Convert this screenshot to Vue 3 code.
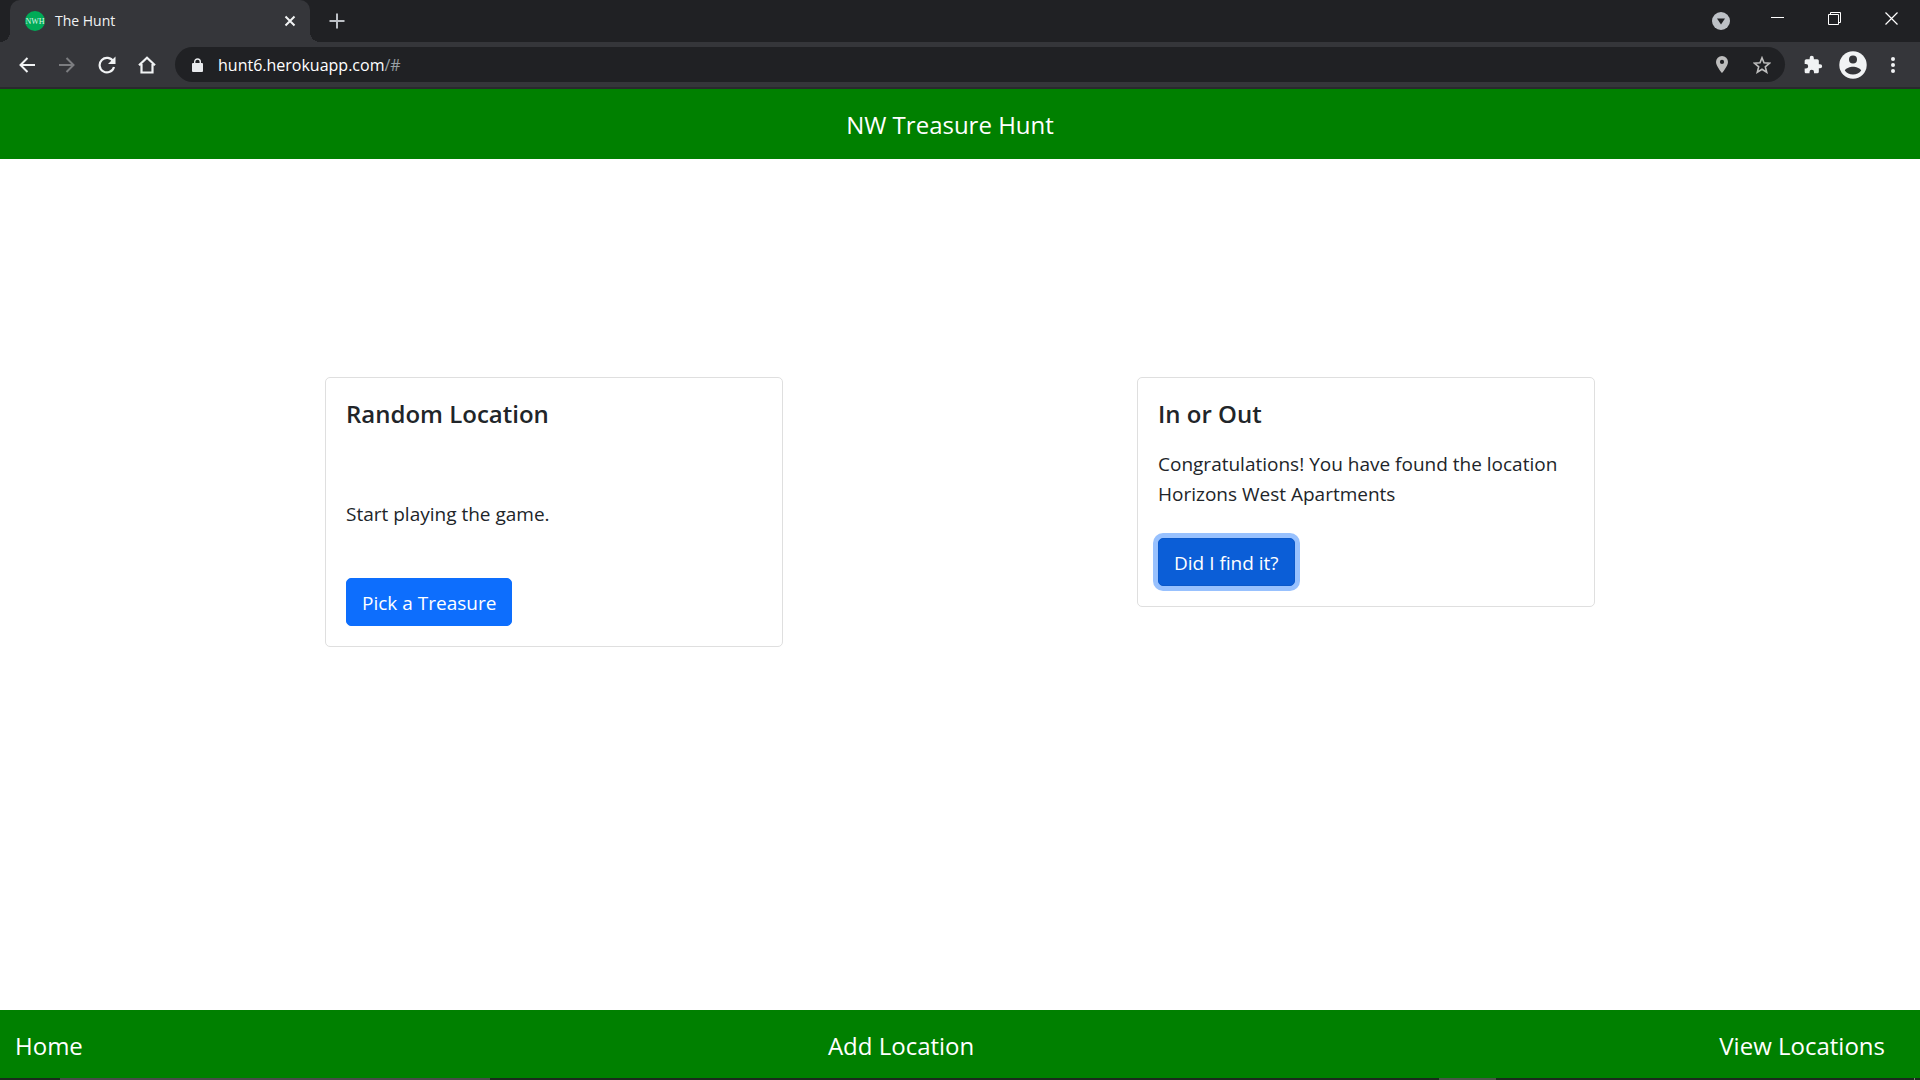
<script setup>
import { ref } from 'vue'

const address = 'hunt6.herokuapp.com'
const cards = ref([
  { id: 'random', title: 'Random Location', text: ['Start playing the game.'], action: 'Pick a Treasure', active: false },
  {
    id: 'result',
    title: 'In or Out',
    text: ['Congratulations! You have found the location', 'Horizons West Apartments'],
    action: 'Did I find it?',
    active: true
  }
])
const links = ['Home', 'Add Location', 'View Locations']
</script>

<template>
  <div class="window">
    <div class="tabstrip">
      <div class="tab">
        <svg class="favicon" width="20" height="20" viewBox="0 0 20 20">
          <circle cx="10" cy="10" r="10" fill="#00ab57" />
          <text x="10" y="13" text-anchor="middle" font-size="8" fill="#d9f5e5">NWH</text>
        </svg>
        <span class="tab-title">The Hunt</span>
        <button class="icon tab-close" aria-label="Close tab">
          <svg width="12" height="12" viewBox="0 0 12 12"><path d="M1.5 1.5l9 9M10.5 1.5l-9 9" stroke="#f1f3f4" stroke-width="2" /></svg>
        </button>
      </div>
      <button class="icon new-tab" aria-label="New tab">
        <svg width="16" height="16" viewBox="0 0 16 16"><path d="M8 .5v15M.5 8h15" stroke="#bdc1c6" stroke-width="2" /></svg>
      </button>
      <div class="window-controls">
        <button class="icon search-tabs" aria-label="Search tabs">
          <svg width="18" height="18" viewBox="0 0 18 18"><circle cx="9" cy="9" r="9" fill="#bdc1c6" /><path d="M5 6.500h8L9 12.500z" fill="#202124" /></svg>
        </button>
        <button class="icon control" aria-label="Minimize">
          <svg width="13" height="13" viewBox="0 0 13 13"><path d="M0 5.500h13" stroke="#fff" /></svg>
        </button>
        <button class="icon control" aria-label="Restore">
          <svg width="13" height="13" viewBox="0 0 13 13" fill="none" stroke="#fff"><path d="M.5 2.500h10v10H.5zM2.500 2.500v-2h10v10h-2" /></svg>
        </button>
        <button class="icon control" aria-label="Close window">
          <svg width="13" height="13" viewBox="0 0 13 13"><path d="M.5.5l12 12M12.500.5l-12 12" stroke="#fff" stroke-width="1.200" /></svg>
        </button>
      </div>
    </div>

    <div class="toolbar">
      <button class="icon nav" aria-label="Back">
        <svg width="16" height="16" viewBox="0 0 16 16" fill="none" stroke="#f1f3f4" stroke-width="2"><path d="M16 8H1.500M8.500 1L1.500 8l7 7" /></svg>
      </button>
      <button class="icon nav" aria-label="Forward">
        <svg width="16" height="16" viewBox="0 0 16 16" fill="none" stroke="#7c7d80" stroke-width="2"><path d="M0 8h14.500M7.500 1l7 7-7 7" /></svg>
      </button>
      <button class="icon nav" aria-label="Reload">
        <svg width="18" height="18" viewBox="0 0 18 18"><path d="M15.300 5.500A7.300 7.300 0 1 0 16 11" fill="none" stroke="#f1f3f4" stroke-width="2.200" /><path d="M17.500.5V8H10z" fill="#f1f3f4" /></svg>
      </button>
      <button class="icon nav" aria-label="Home page">
        <svg width="18" height="18" viewBox="0 0 18 18"><path d="M1 9.200L9 1.800l8 7.400M3.500 8v8.500h11V8" fill="none" stroke="#f1f3f4" stroke-width="2.200" /></svg>
      </button>
      <div class="omnibox">
        <svg width="12" height="14" viewBox="0 0 12 14"><rect x="0" y="5" width="11" height="9" rx="1" fill="#e8eaed" /><path d="M2.700 5.500V3.800a2.800 2.800 0 0 1 5.600 0v1.700" fill="none" stroke="#e8eaed" stroke-width="1.400" /></svg>
        <span class="url">{{ address }}<span class="path">/#</span></span>
        <button class="icon" aria-label="Location access">
          <svg width="12" height="17" viewBox="0 0 12 17"><path d="M6 0a6 6 0 0 0-6 6c0 4.300 6 11 6 11s6-6.700 6-11a6 6 0 0 0-6-6zm0 8a2.100 2.100 0 1 1 0-4.200A2.100 2.100 0 0 1 6 8z" fill="#bdbdbd" /></svg>
        </button>
        <button class="icon star" aria-label="Bookmark this page">
          <svg width="18" height="18" viewBox="0 0 18 18"><path d="M9 1.800l2 5 5.600.4-4.300 3.600 1.400 5.400L9 13.300l-4.700 2.900 1.400-5.400L1.400 7.200 7 6.800z" fill="none" stroke="#bdbdbd" stroke-width="1.600" /></svg>
        </button>
      </div>
      <button class="icon extensions" aria-label="Extensions">
        <svg width="20" height="20" viewBox="0 0 24 24"><path d="M20.500 11H19V7a2 2 0 0 0-2-2h-4V3.500a2.500 2.500 0 0 0-5 0V5H4a2 2 0 0 0-2 2v3.800h1.500a2.700 2.700 0 0 1 0 5.400H2V20c0 1.100.9 2 2 2h3.800v-1.500a2.700 2.700 0 0 1 5.400 0V22H17a2 2 0 0 0 2-2v-4h1.500a2.500 2.500 0 0 0 0-5z" fill="#f1f3f4" /></svg>
      </button>
      <button class="icon profile" aria-label="Profile">
        <svg width="28" height="28" viewBox="0 0 28 28"><circle cx="14" cy="14" r="13.700" fill="#f1f3f4" /><circle cx="14" cy="8.500" r="4" fill="#35363a" /><path d="M5.800 19.500c1.400-2.600 5.300-3.700 8.200-3.700s6.800 1.100 8.200 3.700c-1.700 2.500-4.800 4.100-8.200 4.100s-6.500-1.600-8.200-4.100z" fill="#35363a" /></svg>
      </button>
      <button class="icon menu" aria-label="Browser menu">
        <svg width="4" height="16" viewBox="0 0 4 16" fill="#f1f3f4"><circle cx="2" cy="2" r="2" /><circle cx="2" cy="8" r="2" /><circle cx="2" cy="14" r="2" /></svg>
      </button>
    </div>

    <header class="banner">NW Treasure Hunt</header>

    <main class="board">
      <section v-for="card in cards" :key="card.id" class="card" :class="card.id">
        <h5>{{ card.title }}</h5>
        <p><template v-for="(line, i) in card.text" :key="line"><br v-if="i" />{{ line }}</template></p>
        <button class="btn" :class="{ active: card.active }">{{ card.action }}</button>
      </section>
    </main>

    <nav class="footer">
      <a v-for="link in links" :key="link" href="#">{{ link }}</a>
    </nav>
    <div class="taskbar"><span class="search"></span><span class="task"></span><span class="desktop"></span></div>
  </div>
</template>

<style>
body { margin: 0; }
</style>

<style scoped>
* { box-sizing: border-box; }
.window {
  display: flex;
  flex-direction: column;
  min-height: 100vh;
  background: #fff;
  color: #212529;
  font-family: "Open Sans", "Noto Sans", sans-serif;
}
button { font-family: inherit; cursor: pointer; }
svg { display: block; }
.icon { display: flex; align-items: center; justify-content: center; padding: 0; border: 0; background: none; }

.tabstrip { display: flex; height: 42px; padding-left: 10px; background: #202124; }
.tab {
  position: relative;
  display: flex;
  align-items: center;
  width: 300px;
  padding: 0 14px 0 15px;
  border-radius: 10px 10px 0 0;
  background: #35363a;
}
.tab::before, .tab::after {
  content: "";
  position: absolute;
  bottom: 0;
  width: 10px;
  height: 10px;
}
.tab::before { right: 100%; background: radial-gradient(circle at 0 0, #202124 10px, #35363a 10px); }
.tab::after { left: 100%; background: radial-gradient(circle at 100% 0, #202124 10px, #35363a 10px); }
.favicon { font-family: "Liberation Serif", serif; }
.tab-title { flex: 1; margin-left: 10px; color: #f1f3f4; font-size: 14px; line-height: 20px; }
.new-tab { width: 36px; margin-left: 9px; }
.window-controls { display: flex; align-items: flex-start; margin-left: auto; }
.control { width: 57px; height: 37px; }
.search-tabs { width: 36px; height: 42px; margin-right: 10px; }

.toolbar {
  display: flex;
  align-items: center;
  height: 47px;
  padding: 0 15px 0 7px;
  border-bottom: 2px solid #292a2d;
  background: #35363a;
}
.nav { width: 40px; height: 40px; }
.omnibox {
  display: flex;
  flex: 1;
  align-items: center;
  height: 35px;
  margin-left: 8px;
  padding: 0 14px 0 17px;
  border-radius: 18px;
  background: #202124;
}
.url { flex: 1; margin-left: 14px; color: #fff; font-size: 16px; line-height: 24px; }
.path { color: #9aa0a6; }
.star { margin-left: 25px; }
.extensions { margin-left: 18px; }
.profile { margin-left: 16px; }
.menu { width: 24px; margin-left: 14px; }

.banner {
  padding: 21px 20px 19px 0;
  background: #008000;
  color: #fff;
  font-size: 24px;
  line-height: 30px;
  text-align: center;
}
.board { display: flex; flex: 1; align-items: flex-start; justify-content: center; gap: 354px; padding-top: 218px; }
.card { width: 458px; padding: 21px 20px 20px; border: 1px solid #dfdfdf; border-radius: 5px; }
.card h5 { margin: 0; font-size: 24px; font-weight: 600; line-height: 30px; }
.card p { margin: 20px 0 29px; font-size: 19px; line-height: 30px; }
.random p { margin: 70px 0 49px; }
.btn {
  display: block;
  height: 48px;
  padding: 2px 15px 0;
  border: 1px solid #0d6efd;
  border-radius: 5px;
  background: #0d6efd;
  color: #fff;
  font-size: 19px;
  line-height: 30px;
}
.btn.active { border-color: #0a58ca; background: #0b5ed7; box-shadow: 0 0 0 5px #98c1fe; }

.footer {
  display: flex;
  align-items: center;
  justify-content: space-between;
  height: 68px;
  padding: 3px 35px 0 15px;
  background: #008000;
}
.footer a { color: #fff; font-size: 24px; line-height: 30px; text-decoration: none; }
.taskbar { display: flex; height: 2px; padding: 0 5px 0 60px; background: #1b2a1d; }
.search { width: 430px; background: #4a4a4a; }
.task { width: 57px; margin-left: 949px; background: #4a5548; }
.desktop { width: 1px; margin-left: auto; background: #7a857a; }
</style>
